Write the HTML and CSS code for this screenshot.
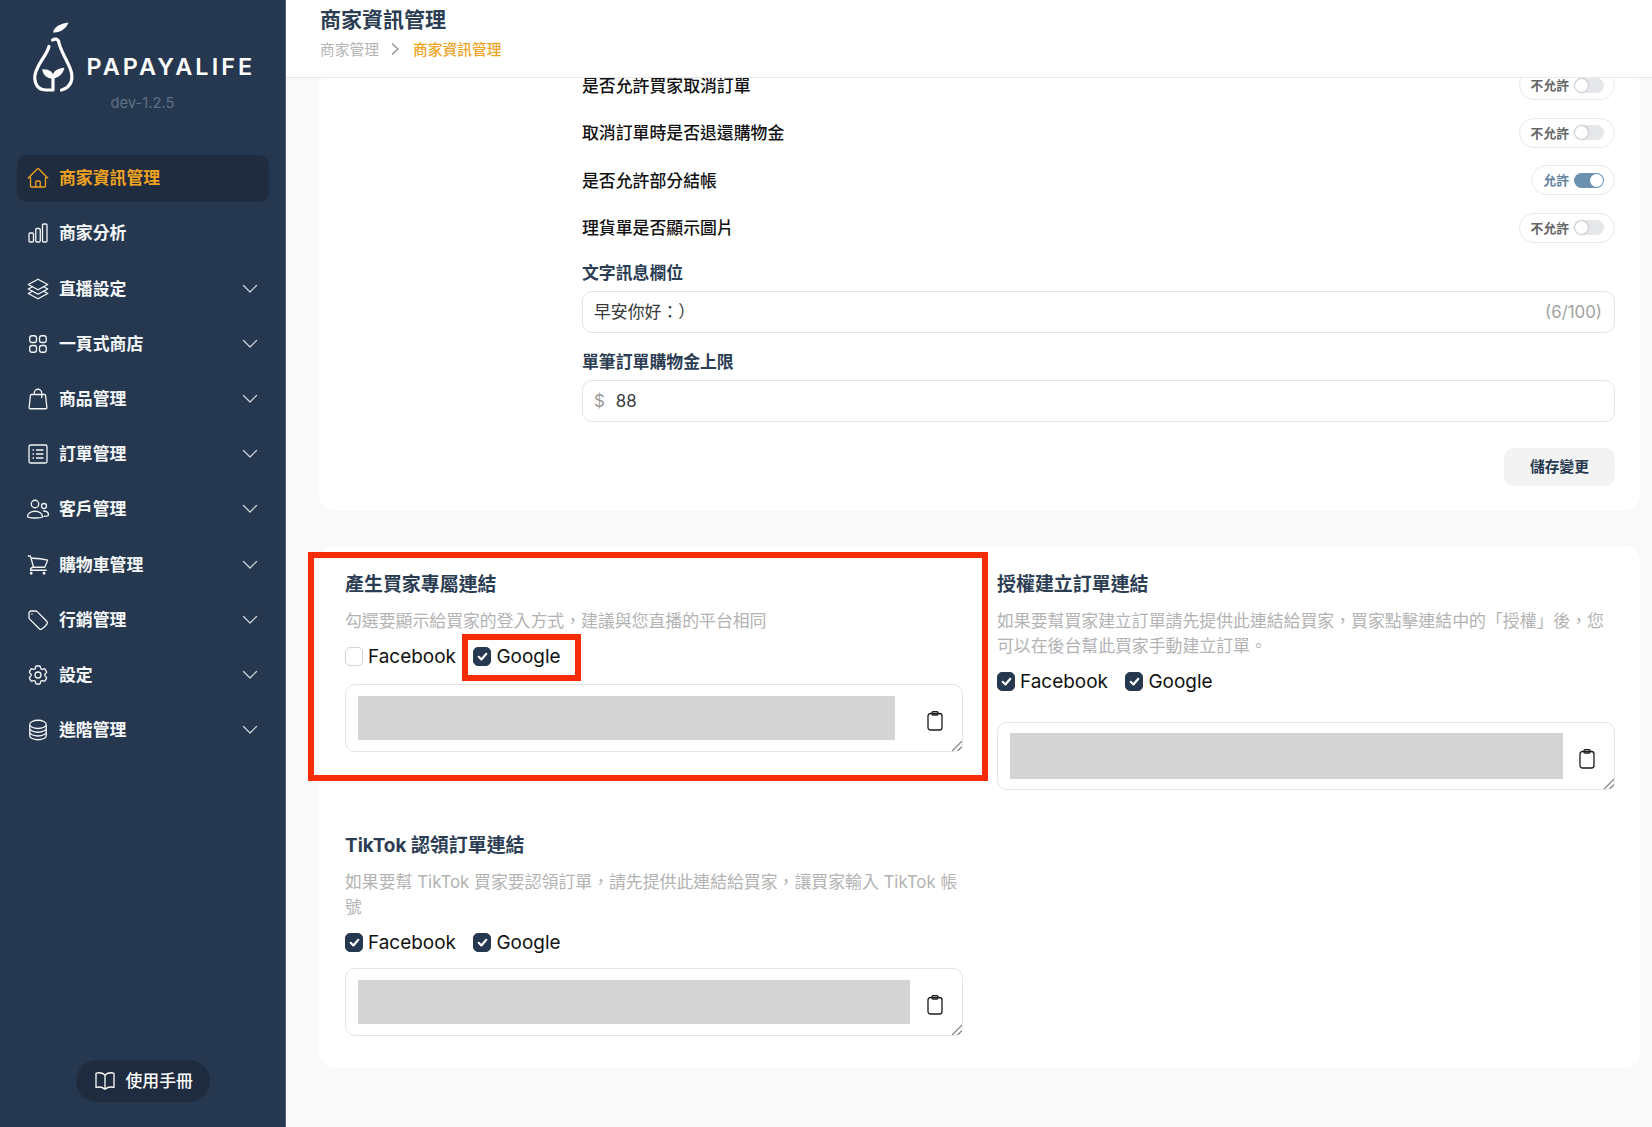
FILE: index.html
```html
<!DOCTYPE html>
<html lang="zh-Hant">
<head>
<meta charset="utf-8">
<title>商家資訊管理</title>
<link rel="stylesheet" href="styles.css">
</head>
<body>
<div class="app">
  <aside class="sidebar">
    <div class="brand">
      <svg class="brand-mark" viewBox="30 20 46 74" fill="none" stroke="#fff" stroke-width="3.200" stroke-linecap="round" stroke-linejoin="round">
        <path d="M53 32.500C54 27 60 23.500 68.500 22.500C66 29 60 33 53 32.500Z" fill="#fff" stroke="none"/>
        <path d="M52.500 40C55 38.500 57.500 39 58.500 41C60 50 66 58 70 68C74 78 72 87 61.500 90"/>
        <path d="M49 46.500C47 54 41 60 37.500 68C32 78 35 90 46 90H53V78"/>
        <path d="M43 70C48 70 53 72 53 78C48 78 44 75 43 70Z" fill="#fff" stroke-width="1.500"/>
        <path d="M63.500 68.500C58 69 53 72 53 78C58 77 62 74 63.500 68.500Z" fill="#fff" stroke-width="1.500"/>
      </svg>
      <span class="brand-name">PAPAYALIFE</span>
    </div>
    <div class="version">dev-1.2.5</div>
    <nav class="nav">
      <a class="nav-item is-active"><svg class="nav-icon" viewBox="0 0 24 24"><path d="M2.25 12l8.954-8.955c.44-.439 1.152-.439 1.591 0L21.75 12M4.5 9.75v10.125c0 .621.504 1.125 1.125 1.125H9.75v-4.875c0-.621.504-1.125 1.125-1.125h2.25c.621 0 1.125.504 1.125 1.125V21h4.125c.621 0 1.125-.504 1.125-1.125V9.75M8.25 21h8.25"/></svg><span class="nav-text">商家資訊管理</span></a>
      <a class="nav-item"><svg class="nav-icon" viewBox="0 0 24 24"><path d="M3 13.125C3 12.504 3.504 12 4.125 12h2.25c.621 0 1.125.504 1.125 1.125v6.75C7.5 20.496 6.996 21 6.375 21h-2.25A1.125 1.125 0 013 19.875v-6.75zM9.75 8.625c0-.621.504-1.125 1.125-1.125h2.25c.621 0 1.125.504 1.125 1.125v11.25c0 .621-.504 1.125-1.125 1.125h-2.25a1.125 1.125 0 01-1.125-1.125V8.625zM16.5 4.125c0-.621.504-1.125 1.125-1.125h2.25C20.496 3 21 3.504 21 4.125v15.75c0 .621-.504 1.125-1.125 1.125h-2.25a1.125 1.125 0 01-1.125-1.125V4.125z"/></svg><span class="nav-text">商家分析</span></a>
      <a class="nav-item"><svg class="nav-icon" viewBox="0 0 24 24"><path d="M6.429 9.75L2.25 12l4.179 2.25m0-4.5l5.571 3 5.571-3m-11.142 0L2.25 7.5 12 2.25l9.75 5.25-4.179 2.25m0 0L21.75 12l-4.179 2.25m0 0l4.179 2.25L12 21.75 2.25 16.5l4.179-2.25m11.142 0l-5.571 3-5.571-3"/></svg><span class="nav-text">直播設定</span><svg class="nav-chevron" viewBox="0 0 16 16"><path d="M1.5 4.5L8 11l6.500-6.500"/></svg></a>
      <a class="nav-item"><svg class="nav-icon" viewBox="0 0 24 24"><path d="M3.750 6A2.250 2.250 0 016 3.750h2.250A2.250 2.250 0 0110.500 6v2.250a2.250 2.250 0 01-2.250 2.250H6a2.250 2.250 0 01-2.250-2.250V6zM3.750 15.750A2.250 2.250 0 016 13.500h2.250a2.250 2.250 0 012.250 2.250V18a2.250 2.250 0 01-2.250 2.250H6A2.250 2.250 0 013.750 18v-2.250zM13.500 6a2.250 2.250 0 012.250-2.250H18A2.250 2.250 0 0120.250 6v2.250A2.250 2.250 0 0118 10.500h-2.250a2.250 2.250 0 01-2.250-2.250V6zM13.500 15.750a2.250 2.250 0 012.250-2.250H18a2.250 2.250 0 012.250 2.250V18A2.250 2.250 0 0118 20.250h-2.250A2.250 2.250 0 0113.500 18v-2.250z"/></svg><span class="nav-text">一頁式商店</span><svg class="nav-chevron" viewBox="0 0 16 16"><path d="M1.5 4.5L8 11l6.500-6.500"/></svg></a>
      <a class="nav-item"><svg class="nav-icon" viewBox="0 0 24 24"><path d="M15.750 10.500V6a3.750 3.750 0 10-7.500 0v1.500m11.356 1.007l1.263 12c.07.665-.45 1.243-1.119 1.243H4.250a1.125 1.125 0 01-1.120-1.243l1.264-12A1.125 1.125 0 015.513 7.500h12.974c.576 0 1.059.435 1.119 1.007z"/></svg><span class="nav-text">商品管理</span><svg class="nav-chevron" viewBox="0 0 16 16"><path d="M1.5 4.5L8 11l6.500-6.500"/></svg></a>
      <a class="nav-item"><svg class="nav-icon" viewBox="0 0 24 24"><rect x="3" y="3" width="18" height="18" rx="1.500"/><path d="M7 8h.5M7 12h.5M7 16h.5M10.500 8H17M10.500 12H17M10.500 16H17"/></svg><span class="nav-text">訂單管理</span><svg class="nav-chevron" viewBox="0 0 16 16"><path d="M1.5 4.5L8 11l6.500-6.500"/></svg></a>
      <a class="nav-item"><svg class="nav-icon" viewBox="0 0 24 24"><circle cx="9" cy="7" r="3.750"/><path d="M1.500 19.500c0-3 3.300-5.250 7.500-5.250s7.500 2.250 7.500 5.250c0 .8-3.400 1.500-7.500 1.500s-7.500-.7-7.500-1.500z"/><circle cx="18" cy="9" r="2.500"/><path d="M17.500 14c3 0 5 1.700 5 4 0 .8-2 1.300-4.500 1.300"/></svg><span class="nav-text">客戶管理</span><svg class="nav-chevron" viewBox="0 0 16 16"><path d="M1.5 4.5L8 11l6.500-6.500"/></svg></a>
      <a class="nav-item"><svg class="nav-icon" viewBox="0 0 24 24"><path d="M2.250 3h1.386c.51 0 .955.343 1.087.835l.383 1.437M7.500 14.250a3 3 0 00-3 3h15.750m-12.750-3h11.218c1.121-2.300 2.100-4.684 2.924-7.138a60.114 60.114 0 00-16.536-1.840M7.500 14.250L5.106 5.272M6 20.250a.75.75 0 11-1.500 0 .75.75 0 011.500 0zm12.750 0a.75.75 0 11-1.500 0 .75.75 0 011.500 0z"/></svg><span class="nav-text">購物車管理</span><svg class="nav-chevron" viewBox="0 0 16 16"><path d="M1.5 4.5L8 11l6.500-6.500"/></svg></a>
      <a class="nav-item"><svg class="nav-icon" viewBox="0 0 24 24"><path d="M9.568 3H5.250A2.250 2.250 0 003 5.250v4.318c0 .597.237 1.170.659 1.591l9.581 9.581c.699.699 1.780.872 2.607.33a18.095 18.095 0 005.223-5.223c.542-.827.369-1.908-.33-2.607L11.160 3.660A2.250 2.250 0 009.568 3z"/><path d="M6 6h.008v.008H6V6z"/></svg><span class="nav-text">行銷管理</span><svg class="nav-chevron" viewBox="0 0 16 16"><path d="M1.5 4.5L8 11l6.500-6.500"/></svg></a>
      <a class="nav-item"><svg class="nav-icon" viewBox="0 0 24 24"><path d="M9.594 3.940c.09-.542.56-.94 1.110-.94h2.593c.55 0 1.020.398 1.110.94l.213 1.281c.063.374.313.686.645.87.074.04.147.083.22.127.324.196.72.257 1.075.124l1.217-.456a1.125 1.125 0 011.370.49l1.296 2.247a1.125 1.125 0 01-.26 1.431l-1.003.827c-.293.24-.438.613-.431.992a6.759 6.759 0 010 .255c-.007.378.138.75.43.99l1.005.828c.424.35.534.954.26 1.430l-1.298 2.247a1.125 1.125 0 01-1.369.491l-1.217-.456c-.355-.133-.75-.072-1.076.124a6.570 6.570 0 01-.22.128c-.331.183-.581.495-.644.869l-.213 1.280c-.09.543-.56.941-1.110.941h-2.594c-.55 0-1.020-.398-1.110-.94l-.213-1.281c-.062-.374-.312-.686-.644-.87a6.520 6.520 0 01-.22-.127c-.325-.196-.72-.257-1.076-.124l-1.217.456a1.125 1.125 0 01-1.369-.49l-1.297-2.247a1.125 1.125 0 01.26-1.431l1.004-.827c.292-.24.437-.613.43-.992a6.932 6.932 0 010-.255c.007-.378-.138-.75-.43-.99l-1.004-.828a1.125 1.125 0 01-.26-1.430l1.297-2.247a1.125 1.125 0 011.370-.491l1.216.456c.356.133.751.072 1.076-.124.072-.044.146-.087.22-.128.332-.183.582-.495.644-.869l.214-1.281z"/><path d="M15 12a3 3 0 11-6 0 3 3 0 016 0z"/></svg><span class="nav-text">設定</span><svg class="nav-chevron" viewBox="0 0 16 16"><path d="M1.5 4.5L8 11l6.500-6.500"/></svg></a>
      <a class="nav-item"><svg class="nav-icon" viewBox="0 0 24 24"><path d="M20.250 6.375c0 2.278-3.694 4.125-8.250 4.125S3.750 8.653 3.750 6.375m16.500 0c0-2.278-3.694-4.125-8.250-4.125S3.750 4.097 3.750 6.375m16.500 0v11.250c0 2.278-3.694 4.125-8.250 4.125s-8.250-1.847-8.250-4.125V6.375m16.500 0v3.750m-16.500-3.750v3.750m16.500 0v3.750C20.250 16.153 16.556 18 12 18s-8.250-1.847-8.250-4.125v-3.750m16.500 0c0 2.278-3.694 4.125-8.250 4.125s-8.250-1.847-8.250-4.125"/></svg><span class="nav-text">進階管理</span><svg class="nav-chevron" viewBox="0 0 16 16"><path d="M1.5 4.5L8 11l6.500-6.500"/></svg></a>
    </nav>
    <a class="manual"><svg class="manual-icon" viewBox="0 0 24 24"><path d="M12 6.042A8.967 8.967 0 006 3.750c-1.052 0-2.062.18-3 .512v14.250A8.987 8.987 0 016 18c2.305 0 4.408.867 6 2.292m0-14.250a8.966 8.966 0 016-2.292c1.052 0 2.062.18 3 .512v14.250A8.987 8.987 0 0018 18a8.967 8.967 0 00-6 2.292m0-14.250v14.250"/></svg><span class="manual-text">使用手冊</span></a>
  </aside>

  <div class="main">
    <header class="topbar">
      <h1 class="page-title">商家資訊管理</h1>
      <div class="crumbs">
        <span class="crumb">商家管理</span>
        <svg class="crumb-sep" viewBox="0 0 12 16"><path d="M3 2.500L9 8l-6 5.500"/></svg>
        <span class="crumb crumb-current">商家資訊管理</span>
      </div>
    </header>

    <div class="scroller">
      <section class="card settings">
        <div class="setting-row"><span class="setting-label">是否允許買家取消訂單</span><span class="toggle"><span class="toggle-text">不允許</span><span class="switch"></span></span></div>
        <div class="setting-row"><span class="setting-label">取消訂單時是否退還購物金</span><span class="toggle"><span class="toggle-text">不允許</span><span class="switch"></span></span></div>
        <div class="setting-row"><span class="setting-label">是否允許部分結帳</span><span class="toggle is-on"><span class="toggle-text">允許</span><span class="switch"></span></span></div>
        <div class="setting-row"><span class="setting-label">理貨單是否顯示圖片</span><span class="toggle"><span class="toggle-text">不允許</span><span class="switch"></span></span></div>

        <div class="field">
          <div class="field-label">文字訊息欄位</div>
          <div class="input"><span class="input-value input-value-cjk">早安你好：）</span><span class="input-count">(6/100)</span></div>
        </div>
        <div class="field">
          <div class="field-label">單筆訂單購物金上限</div>
          <div class="input"><span class="input-prefix">$</span><span class="input-value">88</span></div>
        </div>
        <div class="actions"><button class="btn-save">儲存變更</button></div>
      </section>

      <section class="card links">
        <div class="link-block">
          <div class="mark mark-block"></div>
          <h2 class="link-title">產生買家專屬連結</h2>
          <p class="link-desc">勾選要顯示給買家的登入方式，建議與您直播的平台相同</p>
          <div class="checks checks-tight">
            <label class="check"><span class="box"></span>Facebook</label>
            <label class="check"><span class="mark mark-check"></span><span class="box is-checked"><svg viewBox="0 0 12 12"><path d="M2.500 6.300L5 8.700l4.500-5.200"/></svg></span>Google</label>
          </div>
          <div class="linkbox gap-a">
            <div class="redact redact-a"></div>
            <svg class="copy" viewBox="0 0 16 20"><rect x="1" y="2.500" width="14" height="16.500" rx="2.500"/><rect x="5" y=".7" width="6" height="3.300" rx="1"/></svg>
            <svg class="grip" viewBox="0 0 10 10"><path d="M1 10L10 1M6 10l4-4"/></svg>
          </div>
        </div>

        <div class="link-block">
          <h2 class="link-title">授權建立訂單連結</h2>
          <p class="link-desc">如果要幫買家建立訂單請先提供此連結給買家，買家點擊連結中的「授權」後，您可以在後台幫此買家手動建立訂單。</p>
          <div class="checks checks-tight">
            <label class="check"><span class="box is-checked"><svg viewBox="0 0 12 12"><path d="M2.500 6.300L5 8.700l4.500-5.200"/></svg></span>Facebook</label>
            <label class="check"><span class="box is-checked"><svg viewBox="0 0 12 12"><path d="M2.500 6.300L5 8.700l4.500-5.200"/></svg></span>Google</label>
          </div>
          <div class="linkbox gap-b">
            <div class="redact redact-b"></div>
            <svg class="copy" viewBox="0 0 16 20"><rect x="1" y="2.500" width="14" height="16.500" rx="2.500"/><rect x="5" y=".7" width="6" height="3.300" rx="1"/></svg>
            <svg class="grip" viewBox="0 0 10 10"><path d="M1 10L10 1M6 10l4-4"/></svg>
          </div>
        </div>

        <div class="link-block">
          <h2 class="link-title">TikTok 認領訂單連結</h2>
          <p class="link-desc">如果要幫 TikTok 買家要認領訂單，請先提供此連結給買家，讓買家輸入 TikTok 帳號</p>
          <div class="checks">
            <label class="check"><span class="box is-checked"><svg viewBox="0 0 12 12"><path d="M2.500 6.300L5 8.700l4.500-5.200"/></svg></span>Facebook</label>
            <label class="check"><span class="box is-checked"><svg viewBox="0 0 12 12"><path d="M2.500 6.300L5 8.700l4.500-5.200"/></svg></span>Google</label>
          </div>
          <div class="linkbox gap-c">
            <div class="redact redact-c"></div>
            <svg class="copy" viewBox="0 0 16 20"><rect x="1" y="2.500" width="14" height="16.500" rx="2.500"/><rect x="5" y=".7" width="6" height="3.300" rx="1"/></svg>
            <svg class="grip" viewBox="0 0 10 10"><path d="M1 10L10 1M6 10l4-4"/></svg>
          </div>
        </div>
      </section>
    </div>
  </div>
</div>
</body>
</html>
```
FILE: styles.css
```css
* { box-sizing: border-box; }
html, body { margin: 0; height: 100%; }
body {
  font-family: Inter, "Noto Sans CJK TC", "Noto Sans", sans-serif;
  background: #f9f9f9;
  color: #1f2937;
  overflow: hidden;
}
.app { display: flex; width: 1652px; height: 1127px; }

/* Sidebar */
.sidebar {
  width: 286px;
  flex: none;
  display: flex;
  flex-direction: column;
  background: #26384f;
  border-right: 1px solid #4b5f77;
  padding: 20px 16px 25px 17px;
}
.brand { display: flex; align-items: flex-end; margin-left: 13px; height: 74px; }
.brand-mark { width: 46px; height: 74px; flex: none; }
.brand-name {
  margin: 0 0 15px 10.500px;
  font-size: 23.400px;
  line-height: 24px;
  font-weight: 600;
  letter-spacing: 3.050px;
  color: #fff;
}
.version {
  text-align: center;
  margin-left: -1px;
  font-size: 14.750px;
  line-height: 18px;
  color: #5d7087;
}
.nav { margin-top: 43px; display: flex; flex-direction: column; gap: 8.600px; }
.nav-item {
  display: flex;
  align-items: center;
  height: 46.600px;
  padding: 0 11px 0 9px;
  border-radius: 10px;
  color: #f4f6f8;
}
.nav-item.is-active { background: #1f2c3f; color: #f0a31f; }
.nav-icon {
  width: 24px;
  height: 24px;
  flex: none;
  fill: none;
  stroke: currentColor;
  stroke-width: 1.300;
  stroke-linecap: round;
  stroke-linejoin: round;
}
.nav-text { margin-left: 9px; font-size: 16.860px; font-weight: 700; line-height: 24px; }
.nav-chevron {
  width: 16px;
  height: 16px;
  margin-left: auto;
  fill: none;
  stroke: #d5dae0;
  stroke-width: 1.200;
  stroke-linecap: round;
  stroke-linejoin: round;
}
.manual {
  margin: auto 0 0 59px;
  width: 134px;
  height: 42px;
  display: flex;
  align-items: center;
  gap: 9px;
  padding-left: 16.500px;
  border-radius: 21px;
  background: #1f2c3f;
  color: #fff;
  font-size: 16.860px;
  font-weight: 500;
}
.manual-text { padding-bottom: 3px; }
.manual-icon {
  width: 24px;
  height: 24px;
  flex: none;
  fill: none;
  stroke: #fff;
  stroke-width: 1.300;
  stroke-linejoin: round;
}

/* Main column */
.main { flex: 1; min-width: 0; display: flex; flex-direction: column; }
.topbar {
  height: 78px;
  flex: none;
  background: #fff;
  border-bottom: 1px solid #e9e9e9;
  padding: 6px 0 0 34px;
  position: relative;
  z-index: 2;
}
.page-title {
  margin: 0;
  font-size: 21px;
  line-height: 28px;
  font-weight: 700;
  color: #2b3d53;
}
.crumbs { margin-top: 4px; display: flex; align-items: center; height: 20px; font-size: 14.750px; }
.crumb { color: #b4b4b4; }
.crumb-current { color: #f0a31f; font-weight: 500; }
.crumb-sep {
  width: 12px;
  height: 16px;
  margin: 2px 12px 0 10px;
  fill: none;
  stroke: #8a8a8a;
  stroke-width: 1.200;
}
.scroller { flex: 1; min-height: 0; overflow: hidden; padding: 0 12px 0 33px; }
.card { background: #fff; border-radius: 16px; }

/* Settings card */
.settings { margin-top: -8px; padding: 0 25px 25px 263px; display: flex; flex-direction: column; }
.setting-row {
  display: flex;
  align-items: center;
  justify-content: space-between;
  height: 30px;
  margin-bottom: 17.600px;
}
.setting-label { font-size: 16.860px; font-weight: 500; color: #111; padding-bottom: 2px; }
.toggle {
  display: flex;
  align-items: center;
  height: 30px;
  padding: 0 10px 0 11px;
  border: 1px solid #e9e9e9;
  border-radius: 15px;
  background: #fff;
}
.toggle-text { font-size: 12.800px; font-weight: 700; color: #666; padding-bottom: 1px; }
.switch {
  position: relative;
  width: 30px;
  height: 15px;
  margin-left: 5px;
  border-radius: 8px;
  background: #e5e7eb;
}
.switch::after {
  content: "";
  position: absolute;
  top: 1px;
  left: 1px;
  width: 13px;
  height: 13px;
  border-radius: 50%;
  background: #fff;
  box-shadow: 0 0 1px 1px rgba(0, 0, 0, .14);
}
.toggle.is-on .toggle-text { color: #64839f; }
.toggle.is-on .switch { background: #6c91b0; }
.toggle.is-on .switch::after { left: 16px; box-shadow: none; }

.field-label { height: 25px; line-height: 27px; font-size: 16.860px; font-weight: 600; color: #2b3d53; }
.input {
  margin-top: 6px;
  margin-bottom: 15.500px;
  height: 42px;
  display: flex;
  align-items: center;
  padding: 0 12px 0 11px;
  border: 1.500px solid #e4e4e4;
  border-radius: 10px;
  font-size: 16.860px;
}
.input-value { color: #3a3a3a; }
.input-value-cjk { padding-bottom: 4px; }
.input-count { margin-left: auto; color: #a3a3a3; }
.input-prefix { color: #9b9b9b; margin-right: 11px; }
.actions { display: flex; justify-content: flex-end; margin-top: 11px; }
.btn-save {
  width: 111px;
  height: 38px;
  padding: 0 0 3px;
  border: 0;
  border-radius: 10px;
  background: #f3f3f3;
  color: #26394f;
  font: inherit;
  font-size: 14.750px;
  font-weight: 700;
}

/* Link card */
.links {
  margin-top: 35px;
  padding: 26px 25px 32px 26px;
  display: grid;
  grid-template-columns: 618px 618px;
  column-gap: 34px;
  row-gap: 43px;
  align-items: start;
}
.link-block { position: relative; }
.link-title { margin: 0; font-size: 18.960px; line-height: 26px; font-weight: 700; color: #2b3d53; }
.link-desc { margin: 10.700px 0 0; font-size: 16.860px; line-height: 25px; color: #b3b3b3; }
.checks { margin-top: 10px; display: flex; gap: 17.500px; }
.checks-tight { margin-top: 9px; }
.check { display: flex; align-items: center; gap: 5px; height: 26px; font-size: 18.960px; color: #111; position: relative; }
.box {
  width: 18px;
  height: 19px;
  flex: none;
  border: 1.500px solid #cfd3d8;
  border-radius: 5px;
  background: #fff;
}
.box.is-checked { border-color: #26384f; background: #26384f; display: flex; align-items: center; justify-content: center; }
.box svg { width: 13px; height: 13px; fill: none; stroke: #fff; stroke-width: 2; stroke-linecap: round; stroke-linejoin: round; }

.linkbox {
  position: relative;
  height: 68px;
  display: flex;
  align-items: center;
  padding-left: 12px;
  border: 1.500px solid #e4e4e4;
  border-radius: 10px;
  background: #fff;
}
.gap-a { margin-top: 15.300px; }
.gap-b { margin-top: 28px; }
.gap-c { margin-top: 12.400px; }
.redact { height: 44px; background: #d4d4d4; flex: none; }
.redact-a { width: 537px; }
.redact-b { width: 553px; height: 46px; }
.redact-c { width: 552px; }
.copy {
  position: absolute;
  right: 19px;
  top: 26px;
  width: 16px;
  height: 20px;
  fill: none;
  stroke: #1b1b1b;
  stroke-width: 1.300;
}
.grip {
  position: absolute;
  right: 0;
  bottom: 0;
  width: 11px;
  height: 11px;
  fill: none;
  stroke: #7d7d7d;
  stroke-width: 1;
}

/* Review annotations drawn over the page */
.mark { position: absolute; pointer-events: none; border-style: solid; border-color: #f62c05; z-index: 3; }
.mark-block { left: -37px; top: -20px; width: 680px; height: 229px; border-width: 6.500px; }
.mark-check { left: -11.500px; top: -8.700px; width: 119.500px; height: 47px; border-width: 6px; }
```
